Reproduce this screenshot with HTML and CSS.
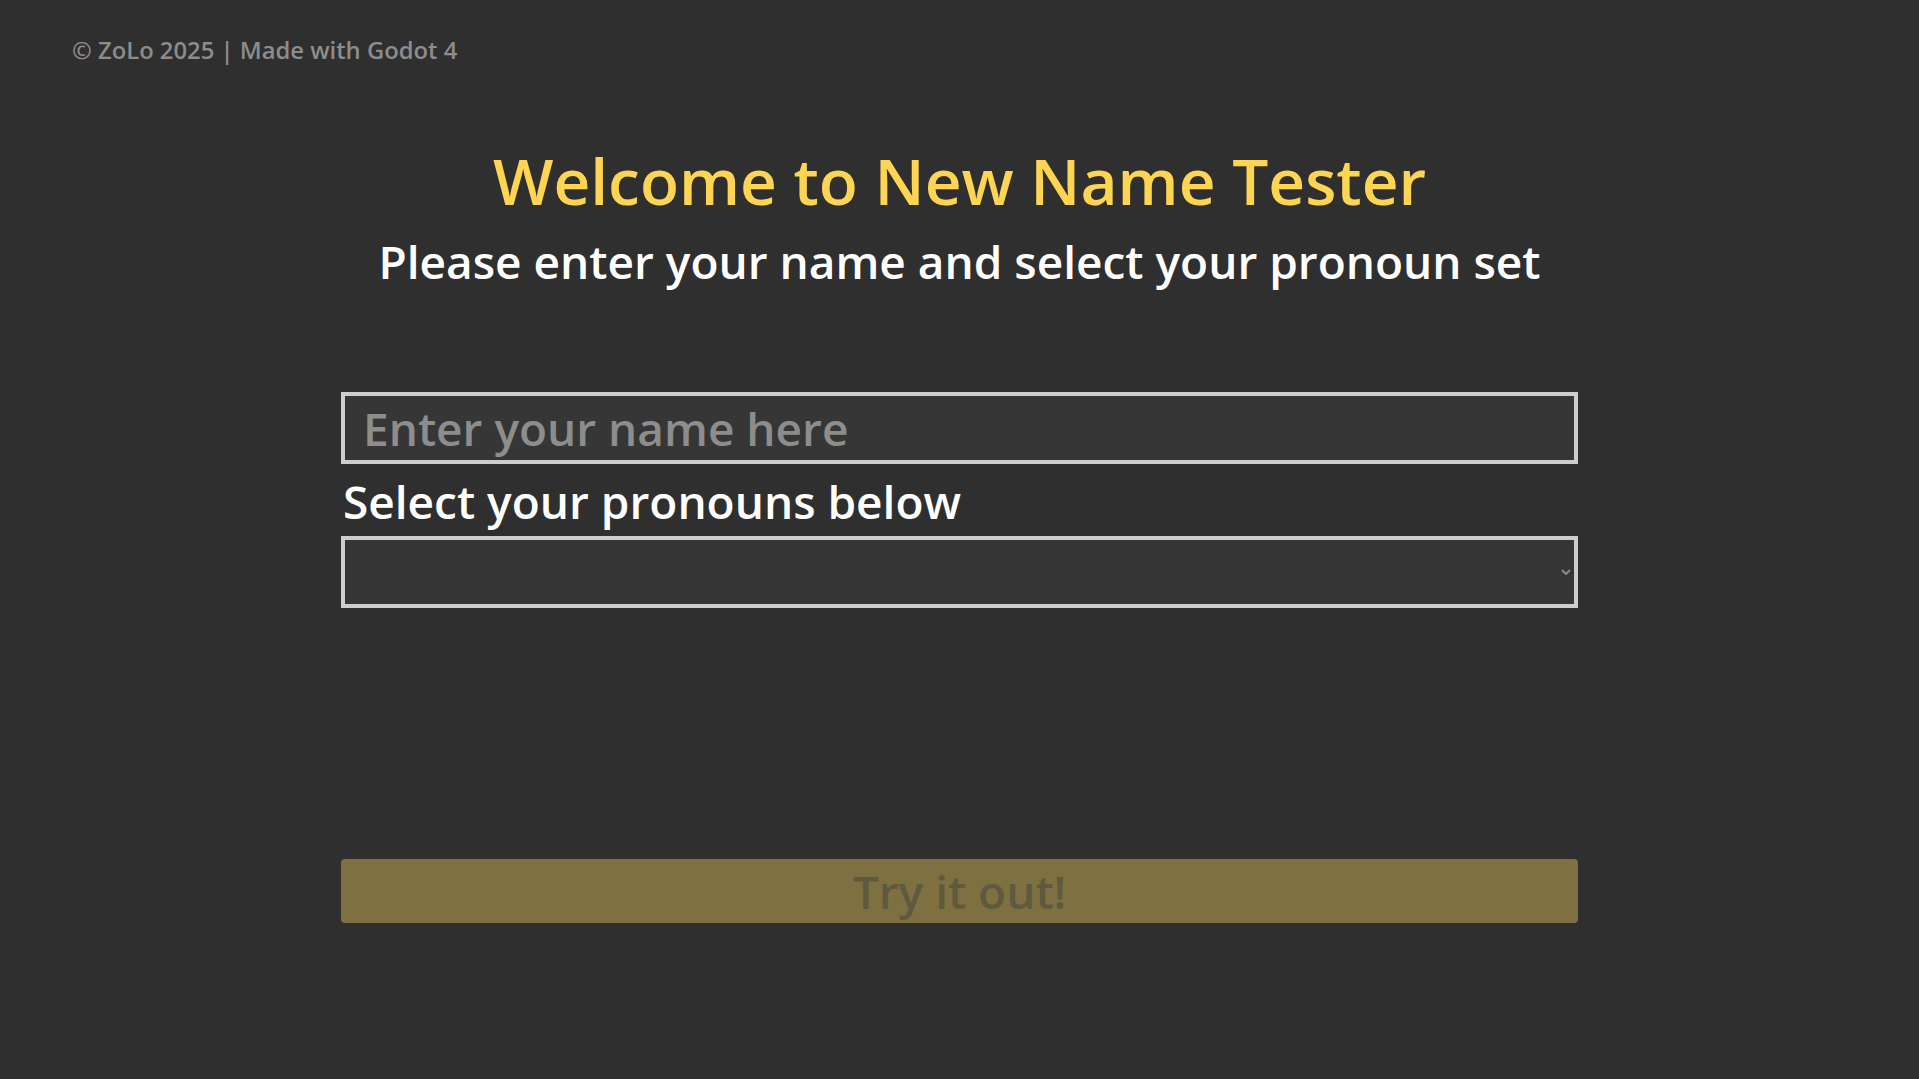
FILE: index.html
```html
<!DOCTYPE html>
<html lang="en">
<head>
  <meta charset="UTF-8" />
  <title>New Name Tester</title>
  <link rel="stylesheet" href="styles.css">
</head>
<body>
  <p class="credit">© ZoLo 2025 | Made with Godot 4</p>

  <div class="main">
    <h1 class="title">Welcome to New Name Tester</h1>
    <p class="subtitle">Please enter your name and select your pronoun set</p>

    <input class="field" id="nameInput" type="text" placeholder="Enter your name here">
    <label class="label" for="pronounSelect">Select your pronouns below</label>
    <div class="select-wrap">
      <select class="field select" id="pronounSelect">
        <option value=""></option>
        <option value="she">she/her</option>
        <option value="he">he/him</option>
        <option value="they">they/them</option>
      </select>
      <svg class="chevron" width="10" height="6" viewBox="0 0 10 6">
        <path d="M1 1 L5 5 L9 1" fill="none" stroke="#8a8a8a" stroke-width="2"/>
      </svg>
    </div>

    <button class="btn" id="tryBtn" disabled>Try it out!</button>
  </div>
</body>
</html>
```

FILE: styles.css
```css
* { box-sizing: border-box; }
body {
  margin: 0;
  height: 100vh;
  overflow: hidden;
  background: #2f2f2f;
  font-family: 'Open Sans', 'Noto Sans', sans-serif;
  font-weight: 600;
  color: #ffffff;
}
.credit {
  margin: 0;
  padding: 35px 0 0 72px;
  font-size: 23.8px;
  line-height: 30px;
  color: #8c8c8c;
}
.main {
  width: 1237px;
  margin: 0 auto;
  display: flex;
  flex-direction: column;
}
.title {
  margin: 76px 0 0;
  font-size: 64px;
  line-height: 80px;
  font-weight: 600;
  color: #fdd553;
  text-align: center;
}
.subtitle {
  margin: 10px 0 0;
  font-size: 46px;
  line-height: 60px;
  text-align: center;
}
.field {
  display: block;
  width: 100%;
  height: 72px;
  margin: 0;
  padding: 0 18px;
  background: #363636;
  border: 4px solid #cdcdcd;
  border-radius: 0;
  font-family: inherit;
  font-weight: 600;
  font-size: 46px;
  color: #ffffff;
  outline: none;
}
#nameInput {
  margin-top: 101px;
}
.field::placeholder {
  color: #8d8d8d;
}
.label {
  margin-top: 7px;
  padding-left: 2px;
  font-size: 46px;
  line-height: 60px;
}
.select-wrap {
  position: relative;
  margin-top: 5px;
}
.select {
  appearance: none;
  -webkit-appearance: none;
}
.chevron {
  position: absolute;
  right: 7px;
  top: 33px;
  pointer-events: none;
}
.btn {
  margin-top: 251px;
  height: 64px;
  padding: 0;
  border: none;
  border-radius: 4px;
  background: #7f7042;
  font-family: inherit;
  font-weight: 600;
  font-size: 46px;
  line-height: 64px;
  color: #5e5a3e;
}
```
